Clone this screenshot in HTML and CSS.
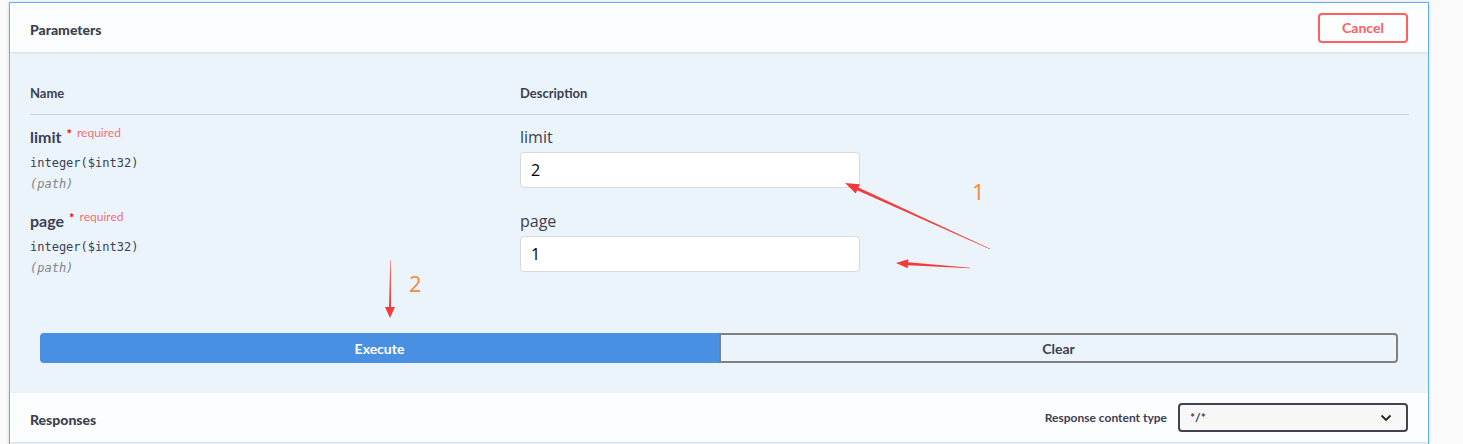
FILE: index.html
```html
<!DOCTYPE html>
<html lang="en">
<head>
<meta charset="utf-8">
<title>Parameters</title>
<link rel="stylesheet" href="styles.css">
</head>
<body>
<div class="page">
  <div class="opblock">
    <div class="section-header">
      <h4 class="section-title">Parameters</h4>
      <button class="btn-cancel">Cancel</button>
    </div>
    <div class="params">
      <div class="table-head">
        <div class="col-name">Name</div>
        <div class="col-desc">Description</div>
      </div>
      <div class="param-row">
        <div class="col-name">
          <div class="pname">limit<span class="star">*</span><span class="req">required</span></div>
          <div class="ptype">integer($int32)</div>
          <div class="pin">(path)</div>
        </div>
        <div class="col-desc">
          <div class="plabel">limit</div>
          <input class="pinput" type="text" value="2">
        </div>
      </div>
      <div class="param-row">
        <div class="col-name">
          <div class="pname">page<span class="star">*</span><span class="req">required</span></div>
          <div class="ptype">integer($int32)</div>
          <div class="pin">(path)</div>
        </div>
        <div class="col-desc">
          <div class="plabel">page</div>
          <input class="pinput" type="text" value="1">
        </div>
      </div>
      <div class="btn-group">
        <button class="btn-execute">Execute</button>
        <button class="btn-clear">Clear</button>
      </div>
    </div>
    <div class="section-header">
      <h4 class="section-title">Responses</h4>
      <div class="ctype">
        <span class="ctype-label">Response content type</span>
        <div class="select">
          <span>*/*</span>
          <svg class="chev" width="12" height="8" viewBox="0 0 12 8"><path d="M1.5 1.5 L6 6 L10.5 1.5" fill="none" stroke="#222" stroke-width="1.8"/></svg>
        </div>
      </div>
    </div>
    <div class="rest"></div>
  </div>
  <svg class="annotations" width="1463" height="444" viewBox="0 0 1463 444">
    <polygon fill="#f23c3c" points="845,183 859.9,184.2 858.4,187.4 990.1,248.7 989.9,249.3 857.2,190.2 855.7,193.4"/>
    <polygon fill="#f23c3c" points="896,263 908.3,259.3 908.1,262.3 970,267.7 970,268.3 907.9,265.3 907.7,268.3"/>
    <polygon fill="#f23c3c" points="390,318 395,307 391,307 390.7,260 390.3,260 389,307 385,307"/>
    <text class="anno-num" x="972" y="200">1</text>
    <text class="anno-num" x="409" y="292">2</text>
  </svg>
</div>
</body>
</html>
```
FILE: styles.css
```css
html, body {
  margin: 0;
  padding: 0;
  background: #fafafa;
}

.page {
  position: relative;
  width: 1463px;
  height: 444px;
  overflow: hidden;
  padding: 2px 0 0 9px;
  box-sizing: border-box;
  font-family: "Lato", "Noto Sans", sans-serif;
  color: #3b4151;
}

.opblock {
  width: 1420px;
  box-sizing: border-box;
  border: 1px solid #61affe;
  background: #ebf3fb;
  box-shadow: 0 0 3px rgba(0, 0, 0, 0.15);
}

.section-header {
  position: relative;
  height: 49px;
  padding: 0 20px 0 20px;
  display: flex;
  align-items: center;
  justify-content: space-between;
  background: #fcfdfe;
  box-shadow: 0 1px 2px rgba(0, 0, 0, 0.1);
}

.section-title {
  margin: 0;
  padding-top: 3px;
  font-size: 14px;
  font-weight: 900;
  color: #3b4151;
}

.btn-cancel {
  width: 90px;
  height: 30px;
  box-sizing: border-box;
  border: 2px solid #ff6060;
  border-radius: 4px;
  background: transparent;
  color: #ff6060;
  font-family: "Lato", sans-serif;
  font-size: 14px;
  font-weight: 700;
  padding: 0;
}

.params {
  padding: 21px 19px 30px 20px;
}

.table-head {
  display: flex;
  padding: 13px 0 13px;
  border-bottom: 1px solid #c8cfd9;
  font-size: 13px;
  font-weight: 700;
  line-height: 15px;
}

.col-name {
  width: 490px;
  flex: none;
}

.col-desc {
  flex: 1;
}

.param-row {
  display: flex;
  padding: 12px 0 9px;
  height: 63px;
}

.pname {
  font-size: 16px;
  font-weight: 700;
  line-height: 20px;
  white-space: nowrap;
}

.star {
  color: #ff0000;
  font-size: 13px;
  margin-left: 5px;
  position: relative;
  top: -4px;
}

.req {
  color: rgba(255, 0, 0, 0.6);
  font-size: 12px;
  font-weight: 400;
  margin-left: 5px;
  position: relative;
  top: -6px;
}

.ptype {
  margin-top: 6px;
  font-family: "DejaVu Sans Mono", "Liberation Mono", monospace;
  font-size: 12px;
  line-height: 16px;
  color: #3b4151;
}

.pin {
  margin-top: 5px;
  font-family: "DejaVu Sans Mono", "Liberation Mono", monospace;
  font-size: 12px;
  font-style: italic;
  line-height: 16px;
  color: #858585;
}

.plabel {
  font-family: "Open Sans", "Noto Sans", sans-serif;
  font-size: 16px;
  line-height: 20px;
  color: #3b4151;
}

.pinput {
  display: block;
  margin-top: 5px;
  width: 340px;
  height: 36px;
  box-sizing: border-box;
  border: 1px solid #d9d9d9;
  border-radius: 4px;
  background: #fff;
  padding: 0 10px;
  font-family: "Open Sans", "Noto Sans", sans-serif;
  font-size: 16px;
  color: #000;
  outline: none;
}

.btn-group {
  display: flex;
  margin: 50px 11px 0 10px;
}

.btn-execute,
.btn-clear {
  flex: 1;
  height: 30px;
  box-sizing: border-box;
  font-family: "Lato", sans-serif;
  font-size: 14px;
  font-weight: 700;
  padding: 0;
}

.btn-execute {
  background: #4990e2;
  color: #fff;
  border: 2px solid #4990e2;
  border-radius: 4px 0 0 4px;
}

.btn-clear {
  background: transparent;
  color: #3b4151;
  border: 2px solid #808080;
  border-radius: 0 4px 4px 0;
}

.ctype {
  display: flex;
  align-items: center;
}

.ctype-label {
  font-size: 12px;
  font-weight: 700;
  margin-right: 11px;
}

.select {
  width: 230px;
  height: 29px;
  box-sizing: border-box;
  border: 2px solid #41444e;
  border-radius: 4px;
  background: #f7f7f7;
  display: flex;
  align-items: center;
  justify-content: space-between;
  padding: 0 14px 0 10px;
  font-size: 12px;
  font-weight: 700;
  color: #3b4151;
}

.rest {
  height: 40px;
}

.annotations {
  position: absolute;
  top: 0;
  left: 0;
  pointer-events: none;
}

.anno-num {
  font-family: "Open Sans", sans-serif;
  font-size: 22px;
  fill: #f5893b;
}
```
